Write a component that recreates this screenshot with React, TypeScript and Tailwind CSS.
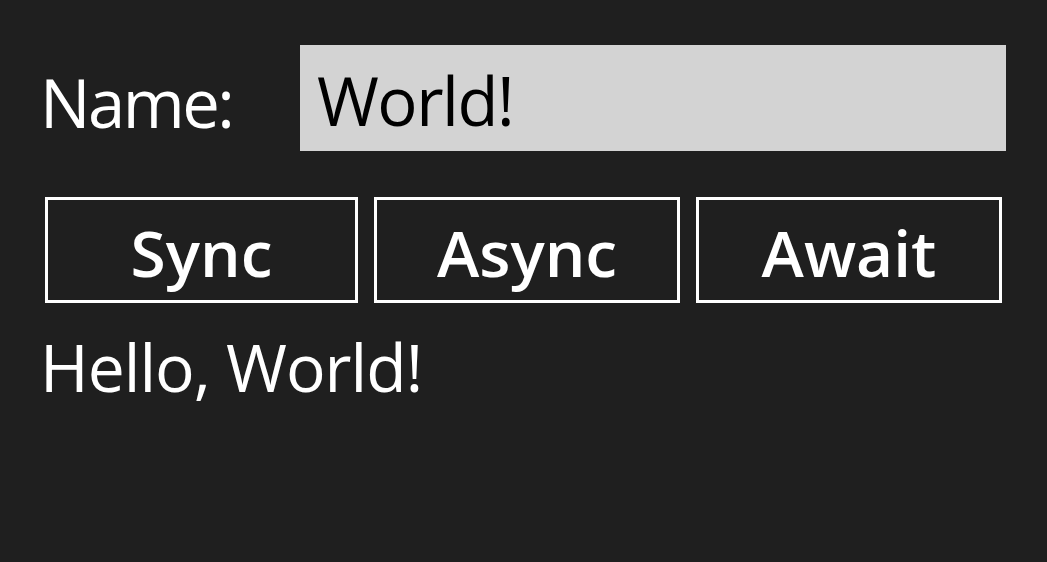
export default function App() {
  const font = { fontFamily: '"Open Sans", "Noto Sans", sans-serif' };
  return (
    <div className="w-[1047px] h-[562px] bg-[#1f1f1f] text-white pt-[45px]" style={font}>
      <div className="flex items-start h-[106px]">
        <div className="ml-[40px] w-[260px] mt-[24px] text-[67px] leading-none tracking-[-2.5px]">Name:</div>
        <div className="w-[706px] h-[106px] bg-[#d3d3d3] text-black text-[67px] leading-none pl-[17px] pt-[22px] tracking-[-1.5px]">World!</div>
      </div>
      <div className="flex gap-[16px] ml-[45px] mt-[46px]">
        <button className="w-[313px] h-[106px] border-[3px] border-white text-[64px] font-semibold leading-none flex items-center justify-center pt-[6px]">Sync</button>
        <button className="w-[306px] h-[106px] border-[3px] border-white text-[64px] font-semibold leading-none flex items-center justify-center pt-[6px]">Async</button>
        <button className="w-[306px] h-[106px] border-[3px] border-white text-[64px] font-semibold leading-none flex items-center justify-center pt-[6px]">Await</button>
      </div>
      <div className="ml-[40px] mt-[30px] text-[66px] leading-none tracking-[-1px]">Hello, World!</div>
    </div>
  );
}
